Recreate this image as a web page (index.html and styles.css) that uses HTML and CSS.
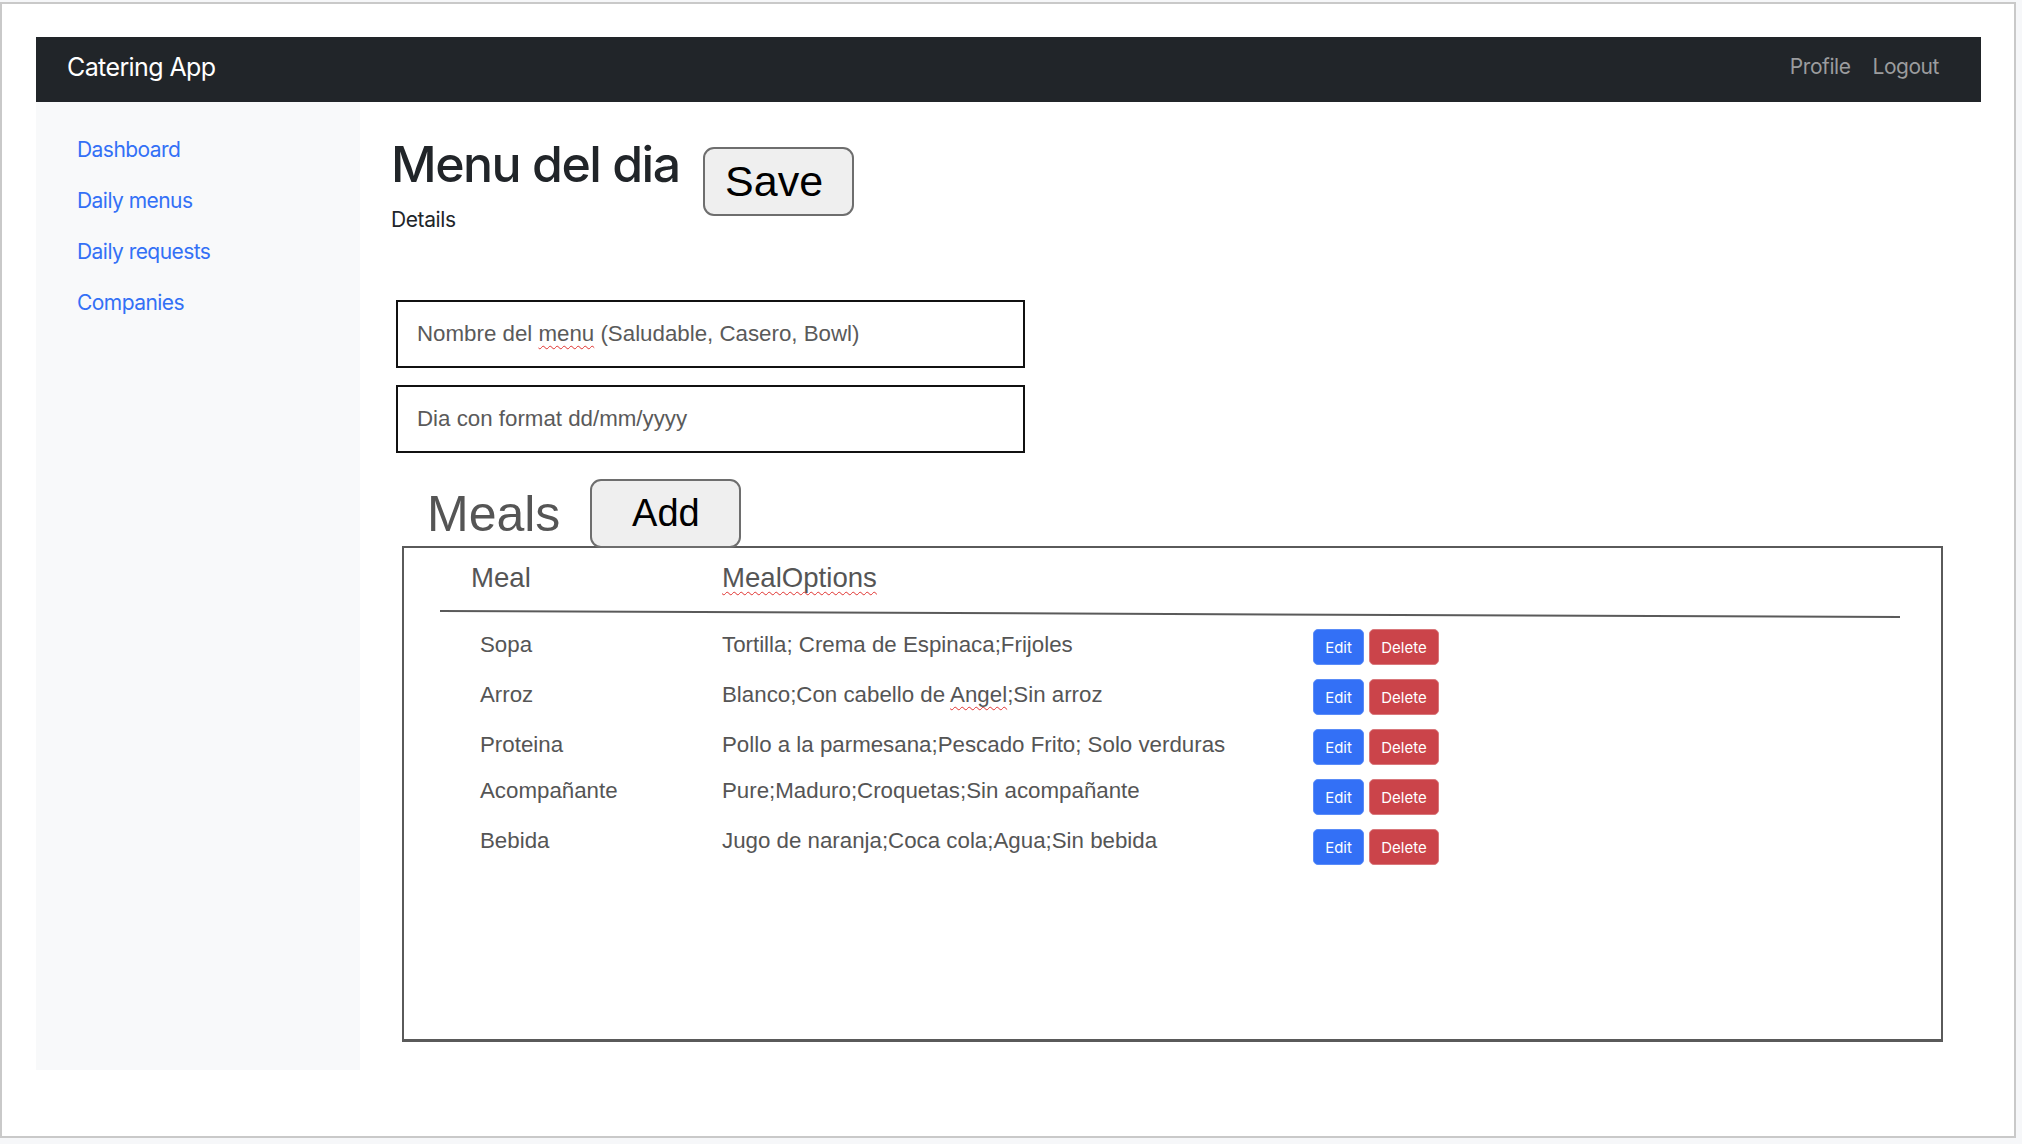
FILE: index.html
```html
<!DOCTYPE html>
<html lang="es">
<head>
<meta charset="utf-8">
<title>Catering App</title>
<link rel="stylesheet" href="styles.css">
</head>
<body>
<div class="frame">
  <div class="app">
    <nav class="navbar">
      <span class="brand">Catering App</span>
      <div class="nav-right">
        <a class="nav-link">Profile</a>
        <a class="nav-link">Logout</a>
      </div>
    </nav>
    <div class="layout">
      <aside class="sidebar">
        <a class="side-link">Dashboard</a>
        <a class="side-link">Daily menus</a>
        <a class="side-link">Daily requests</a>
        <a class="side-link">Companies</a>
      </aside>
      <main class="main">
        <div class="title-row">
          <div class="title-block">
            <h1 class="title">Menu del dia</h1>
            <div class="details">Details</div>
          </div>
          <button class="mock-btn save-btn">Save</button>
        </div>
        <div class="form">
          <div class="field">Nombre del <span class="typo">menu</span> (Saludable, Casero, Bowl)</div>
          <div class="field">Dia con format dd/mm/yyyy</div>
        </div>
        <div class="meals-row">
          <span class="meals-title">Meals</span>
          <button class="mock-btn add-btn">Add</button>
        </div>
        <div class="table-box">
          <div class="thead">
            <span>Meal</span>
            <span><span class="typo">MealOptions</span></span>
          </div>
          <div class="rule"></div>
          <div class="tbody">
            <div class="trow">
              <span class="cell">Sopa</span>
              <span class="cell">Tortilla; Crema de Espinaca;Frijoles</span>
              <span class="actions"><button class="btn btn-edit">Edit</button><button class="btn btn-delete">Delete</button></span>
            </div>
            <div class="trow">
              <span class="cell">Arroz</span>
              <span class="cell">Blanco;Con cabello de <span class="typo">Angel</span>;Sin arroz</span>
              <span class="actions"><button class="btn btn-edit">Edit</button><button class="btn btn-delete">Delete</button></span>
            </div>
            <div class="trow">
              <span class="cell">Proteina</span>
              <span class="cell">Pollo a la parmesana;Pescado Frito; Solo verduras</span>
              <span class="actions"><button class="btn btn-edit">Edit</button><button class="btn btn-delete">Delete</button></span>
            </div>
            <div class="trow row-up">
              <span class="cell">Acompañante</span>
              <span class="cell">Pure;Maduro;Croquetas;Sin acompañante</span>
              <span class="actions"><button class="btn btn-edit">Edit</button><button class="btn btn-delete">Delete</button></span>
            </div>
            <div class="trow row-up">
              <span class="cell">Bebida</span>
              <span class="cell">Jugo de naranja;Coca cola;Agua;Sin bebida</span>
              <span class="actions"><button class="btn btn-edit">Edit</button><button class="btn btn-delete">Delete</button></span>
            </div>
          </div>
        </div>
      </main>
    </div>
  </div>
</div>
</body>
</html>
```

FILE: styles.css
```css
html {
  background: #f6f7f9;
}
body {
  margin: 0;
  font-family: Inter, "Liberation Sans", sans-serif;
  color: #212529;
}
.frame {
  margin-top: 2px;
  width: 2016px;
  height: 1136px;
  box-sizing: border-box;
  border: 2px solid #c9c9c9;
  background: #ffffff;
  overflow: hidden;
}
.app {
  margin: 33px 33px 0 34px;
}
.navbar {
  height: 65px;
  box-sizing: border-box;
  background: #212529;
  display: flex;
  align-items: center;
  justify-content: space-between;
  padding: 0 42px 5px 31px;
}
.brand {
  color: #ffffff;
  font-size: 25px;
  line-height: 32px;
  letter-spacing: -0.6px;
}
.nav-right {
  display: flex;
  gap: 22px;
}
.nav-link {
  color: #9b9c9e;
  font-size: 21px;
  line-height: 28px;
  letter-spacing: -0.45px;
}
.layout {
  display: flex;
}
.sidebar {
  width: 324px;
  height: 968px;
  flex: none;
  background: #f8f9fa;
  box-sizing: border-box;
  padding: 22px 0 0 41px;
}
.side-link {
  display: block;
  color: #3370f6;
  font-size: 21px;
  line-height: 51px;
  letter-spacing: -0.55px;
}
.main {
  flex: 1;
  padding: 32px 0 0 33px;
}
.title-row {
  display: flex;
  align-items: flex-start;
  gap: 23px;
}
.title-block {
  margin-left: -2px;
}
.title {
  margin: 0 0 9px 0;
  font-size: 50px;
  font-weight: 500;
  line-height: 61px;
  letter-spacing: -1.5px;
}
.details {
  font-size: 21px;
  line-height: 31px;
  letter-spacing: -0.4px;
}
.mock-btn {
  width: 151px;
  height: 69px;
  box-sizing: border-box;
  border: 2px solid #6e6e6e;
  border-radius: 11px;
  background: #efefef;
  color: #000000;
  font-family: "Liberation Sans", Arial, sans-serif;
  padding: 0;
}
.save-btn {
  margin-top: 13px;
  font-size: 43px;
  padding-right: 8px;
}
.add-btn {
  font-size: 38px;
  position: relative;
  z-index: 1;
}
.form {
  margin: 65px 0 0 3px;
  display: flex;
  flex-direction: column;
  gap: 17px;
}
.field {
  width: 629px;
  height: 68px;
  box-sizing: border-box;
  border: 2px solid #111111;
  padding-left: 19px;
  line-height: 63px;
  font-family: "Liberation Sans", Arial, sans-serif;
  font-size: 22.3px;
  color: #5a5a5a;
  white-space: nowrap;
}
.typo {
  text-decoration: underline wavy #e0322f;
  text-decoration-thickness: 1px;
  text-underline-offset: 4px;
  text-decoration-skip-ink: none;
}
.meals-row {
  margin: 26px 0 0 34px;
  display: flex;
  align-items: center;
  gap: 30px;
  position: relative;
  z-index: 1;
}
.meals-title {
  font-family: "Liberation Sans", Arial, sans-serif;
  font-size: 50px;
  color: #555555;
}
.table-box {
  margin: -2px 0 0 9px;
  width: 1541px;
  height: 496px;
  box-sizing: border-box;
  border: 2px solid #5a5a5a;
  border-bottom-width: 3px;
  font-family: "Liberation Sans", Arial, sans-serif;
  color: #555555;
}
.thead {
  display: grid;
  grid-template-columns: 251px auto;
  padding: 14px 0 0 67px;
  font-size: 27.6px;
  line-height: 31px;
}
.rule {
  margin: 17px 0 0 36px;
  width: 1460px;
  height: 2px;
  background: #5a5a5a;
  transform-origin: left center;
  transform: rotate(0.235deg);
}
.tbody {
  margin-top: 10px;
}
.trow {
  height: 50px;
  display: grid;
  grid-template-columns: 242px 591px auto;
  padding-left: 76px;
  align-items: center;
}
.cell {
  align-self: start;
  font-size: 22.3px;
  line-height: 45px;
  color: #555555;
  white-space: nowrap;
}
.row-up .cell {
  line-height: 37px;
}
.actions {
  display: flex;
  gap: 5px;
}
.btn {
  height: 36px;
  border: 1px solid transparent;
  border-radius: 5px;
  color: #ffffff;
  font-family: Inter, "Liberation Sans", sans-serif;
  font-size: 15px;
  padding: 0;
}
.btn-edit {
  width: 51px;
  background: #3370f6;
  border-color: #5a8cf8;
}
.btn-delete {
  width: 70px;
  background: #cb444a;
  border-color: #d9777b;
}
```
